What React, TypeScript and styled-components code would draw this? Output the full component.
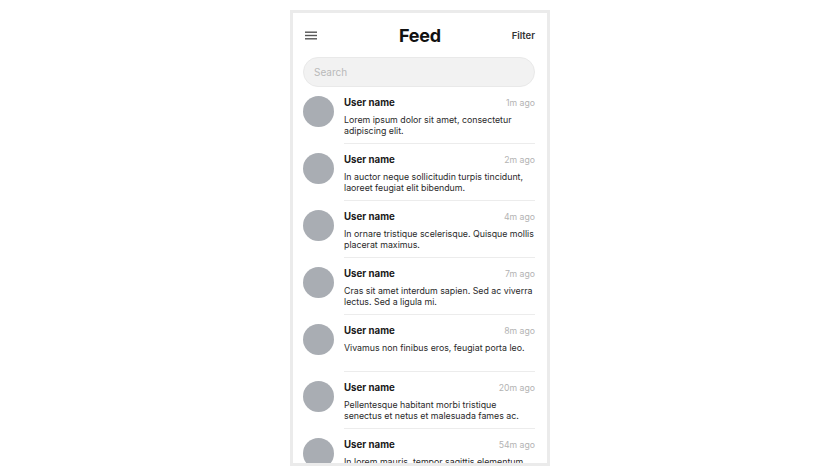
import React from 'react';
import styled, {createGlobalStyle} from 'styled-components';

const GlobalStyle = createGlobalStyle`
    html, body {
        margin: 0;
        padding: 0;
        background: #ffffff;
        font-family: Inter, "Noto Sans", sans-serif;
    }
`;

type Post = {
    time: string;
    text: string;
};

const posts: Post[] = [
    {time: '1m ago', text: 'Lorem ipsum dolor sit amet, consectetur adipiscing elit.'},
    {time: '2m ago', text: 'In auctor neque sollicitudin turpis tincidunt, laoreet feugiat elit bibendum.'},
    {time: '4m ago', text: 'In ornare tristique scelerisque. Quisque mollis placerat maximus.'},
    {time: '7m ago', text: 'Cras sit amet interdum sapien. Sed ac viverra lectus. Sed a ligula mi.'},
    {time: '8m ago', text: 'Vivamus non finibus eros, feugiat porta leo.'},
    {time: '20m ago', text: 'Pellentesque habitant morbi tristique senectus et netus et malesuada fames ac.'},
    {time: '54m ago', text: 'In lorem mauris, tempor sagittis elementum, ut luctus nunc.'},
];

const App: React.FunctionComponent = () => {
    return (
        <Page>
            <GlobalStyle/>
            <Phone>
                <Header>
                    <MenuButton aria-label="menu">
                        <svg width="12" height="9" viewBox="0 0 12 9">
                            <rect x="0" y="0.5" width="12" height="1.4" fill="#555"/>
                            <rect x="0" y="3.8" width="12" height="1.4" fill="#555"/>
                            <rect x="0" y="7.1" width="12" height="1.4" fill="#555"/>
                        </svg>
                    </MenuButton>
                    <Title>Feed</Title>
                    <FilterButton>Filter</FilterButton>
                </Header>
                <SearchBox placeholder="Search"/>
                <List>
                    {posts.map((post, index) => (
                        <Item key={index}>
                            <Avatar/>
                            <Content>
                                <TopRow>
                                    <Name>User name</Name>
                                    <Time>{post.time}</Time>
                                </TopRow>
                                <Message>{post.text}</Message>
                            </Content>
                        </Item>
                    ))}
                </List>
            </Phone>
        </Page>
    );
}

const Page = styled.div`
    display: flex;
    justify-content: center;
    padding: 10px 0 0 5px;
`;

const Phone = styled.div`
    width: 232px;
    height: 450px;
    border: 3px solid #ebebeb;
    background: #ffffff;
    overflow: hidden;
    padding: 0 12px 0 10px;
    box-sizing: content-box;
`;

const Header = styled.div`
    height: 44px;
    display: flex;
    align-items: center;
    justify-content: space-between;
`;

const MenuButton = styled.div`
    width: 40px;
    display: flex;
    align-items: center;
    padding-left: 2px;
`;

const Title = styled.h1`
    margin: 0;
    font-size: 18px;
    font-weight: 700;
    color: #111;
    letter-spacing: -0.2px;
`;

const FilterButton = styled.div`
    width: 40px;
    text-align: right;
    font-size: 9.5px;
    font-weight: 600;
    color: #333;
`;

const SearchBox = styled.input`
    display: block;
    width: 100%;
    height: 30px;
    box-sizing: border-box;
    border: 1px solid #e9e9e9;
    border-radius: 15px;
    background: #f2f2f2;
    padding: 0 10px;
    font-family: Inter, sans-serif;
    font-size: 10px;
    outline: none;
    &::placeholder {
        color: #b9b9b9;
    }
`;

const List = styled.div`
    display: flex;
    flex-direction: column;
`;

const Item = styled.div`
    display: flex;
    gap: 10px;
    height: 57px;
`;

const Avatar = styled.div`
    flex: 0 0 31px;
    height: 31px;
    margin-top: 9px;
    border-radius: 50%;
    background: #a9adb3;
`;

const Content = styled.div`
    flex: 1;
    min-width: 0;
    padding-top: 9px;
    border-bottom: 1px solid #ececec;
    box-sizing: border-box;
`;

const TopRow = styled.div`
    display: flex;
    justify-content: space-between;
    align-items: baseline;
    line-height: 13px;
`;

const Name = styled.span`
    font-size: 9.7px;
    font-weight: 700;
    color: #1a1a1a;
`;

const Time = styled.span`
    font-size: 8.7px;
    color: #b3b3b3;
`;

const Message = styled.p`
    margin: 3.5px 0 0;
    font-size: 8.8px;
    line-height: 11px;
    color: #2a2a2a;
`;

export default App;
